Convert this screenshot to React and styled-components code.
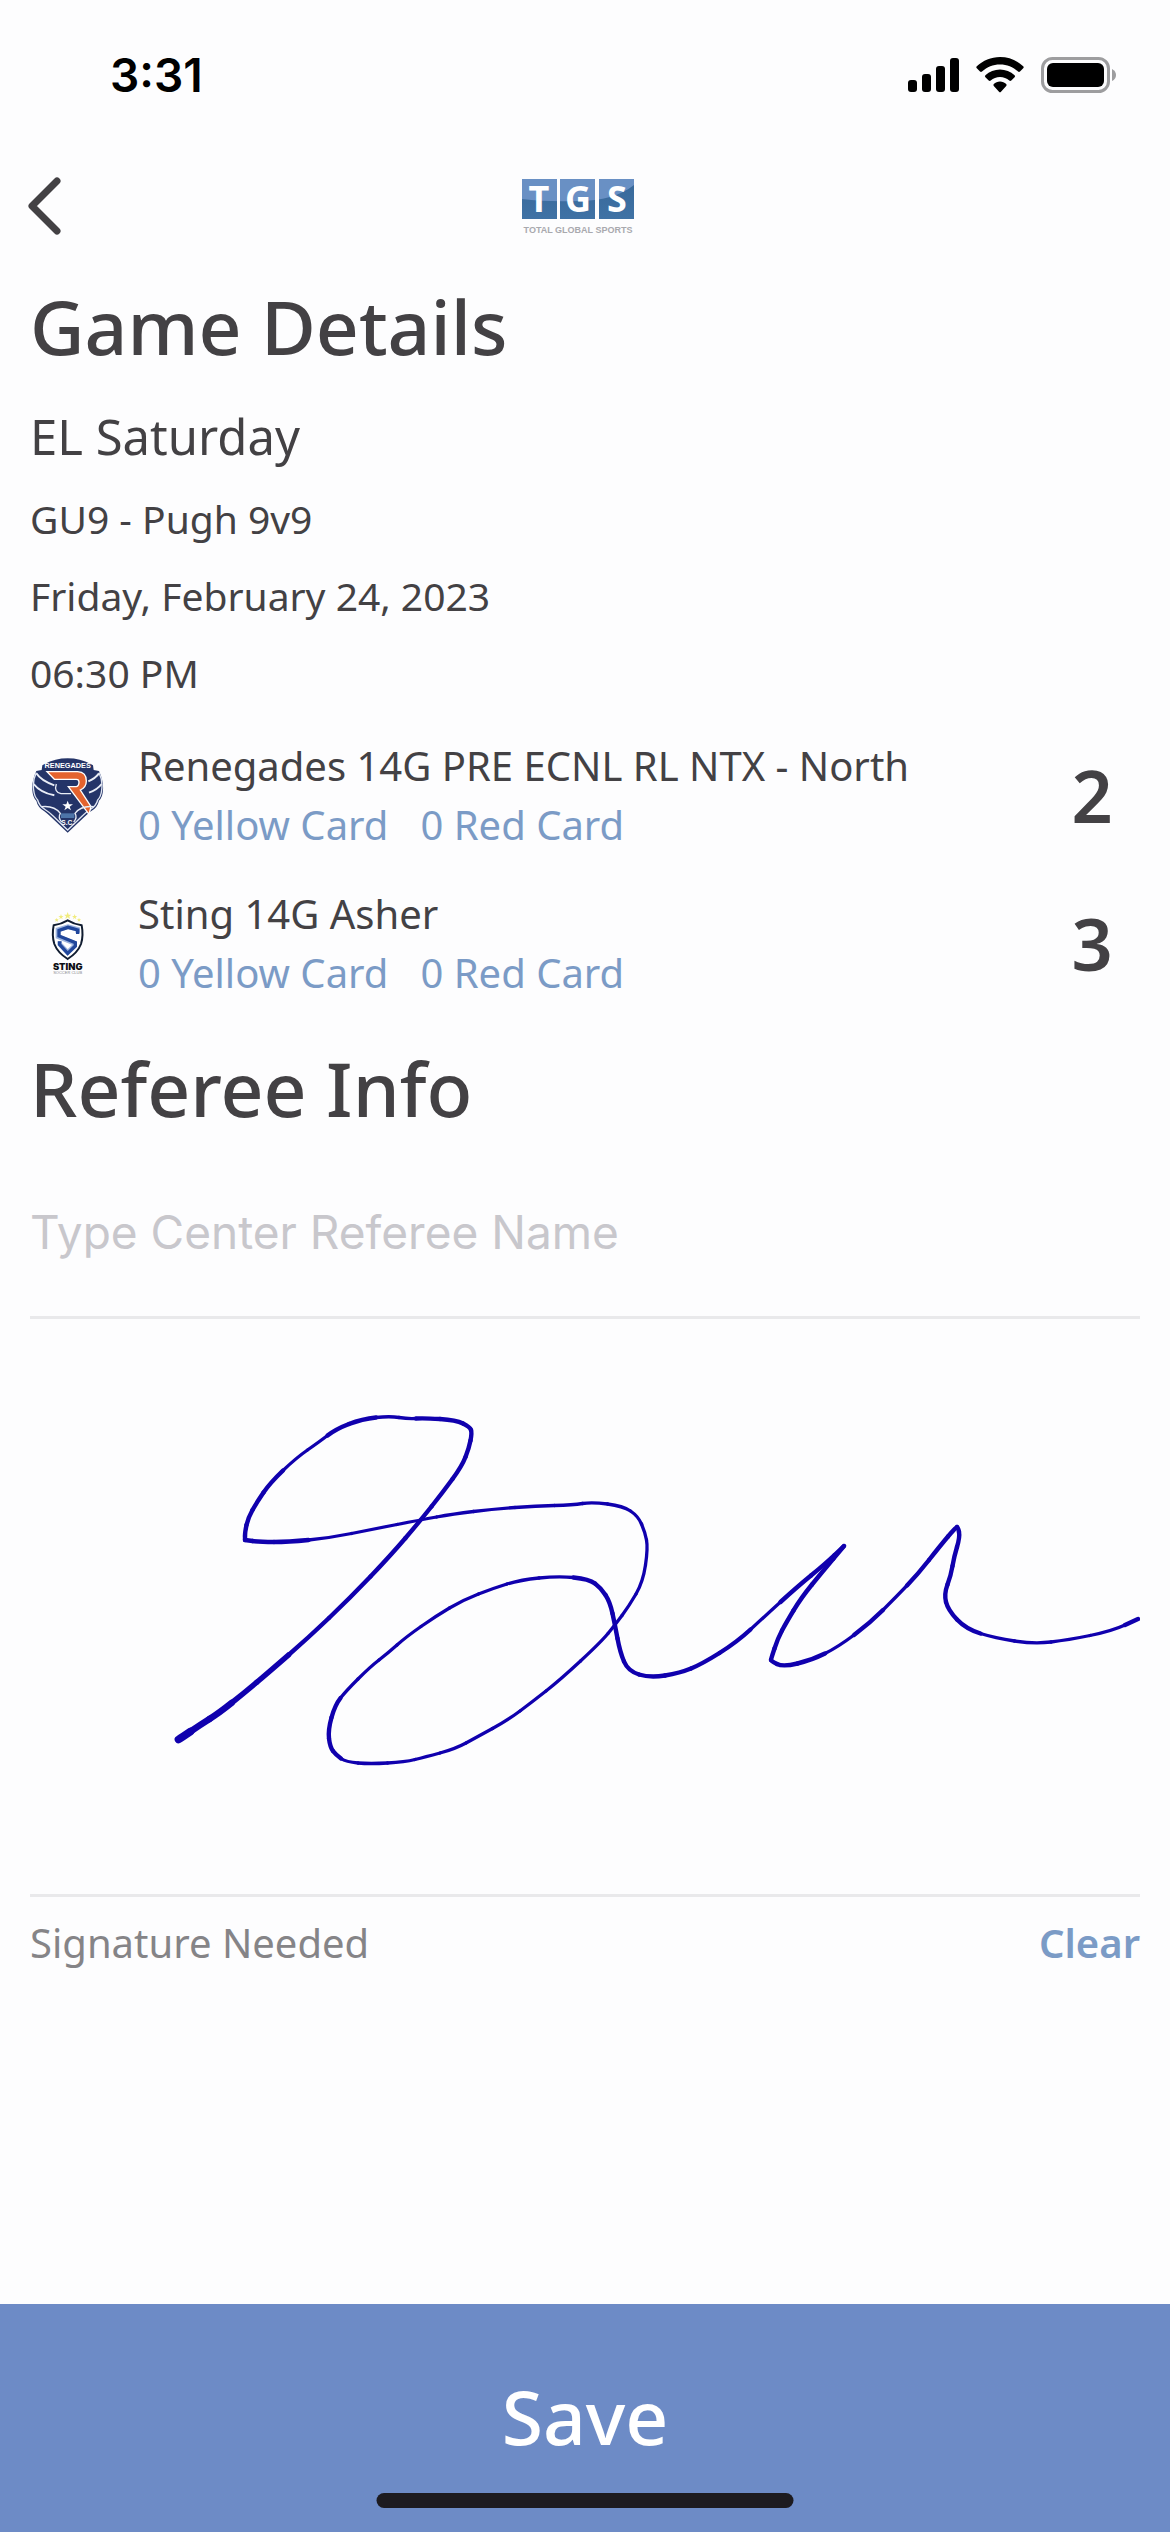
import React, { useState } from 'react'
import styled, { createGlobalStyle } from 'styled-components'

const colors = {
  ink: '#434144',
  muted: '#858487',
  blue: '#7b9bc6',
  save: '#6d8bc6',
  line: '#e9e9eb',
  pen: '#1000ae',
}

// [x, y, width] samples, a doubled sample keeps a sharp corner
const signature = [
  [146, 422, 8], [151, 419, 7], [170, 406, 6], [189, 394, 6], [214, 374, 5],
  [239, 353, 5], [278, 319, 4], [320, 279, 4], [361, 236, 4], [390, 202, 4],
  [413, 173, 4], [432, 147, 4], [439, 129, 4], [442, 114, 4], [440, 108, 4],
  [426, 101, 4], [394, 99, 4], [378, 100, 3], [360, 97, 3], [332, 100, 4],
  [306, 110, 4], [289, 123, 3], [266, 139, 3], [240, 164, 4], [227, 183, 4],
  [218, 199, 4], [215, 213, 4], [215, 221, 4], [215, 221, 4], [230, 223, 4],
  [258, 223, 4], [299, 219, 3], [344, 210, 3], [390, 201, 3], [423, 195, 3],
  [464, 190, 3], [506, 187, 3], [543, 186, 3], [562, 183, 3], [593, 187, 3],
  [608, 197, 3], [615, 213, 3], [618, 229, 3], [613, 263, 3], [599, 287, 3],
  [585, 306, 3], [571, 323, 3], [530, 361, 3], [502, 383, 3], [478, 401, 3],
  [447, 418, 3], [425, 430, 3], [395, 438, 3], [375, 443, 3], [340, 445, 3],
  [316, 443, 3], [306, 436, 4], [300, 428, 4], [298, 411, 4], [305, 386, 4],
  [316, 372, 3], [340, 348, 3], [358, 334, 3], [376, 318, 3], [406, 297, 3],
  [433, 281, 3], [464, 269, 3], [490, 261, 3], [528, 257, 3], [559, 260, 4],
  [571, 269, 4], [580, 283, 4], [585, 306, 4], [590, 333, 4], [598, 352, 4],
  [620, 359, 4], [650, 354, 4], [672, 345, 4], [707, 323, 4], [734, 298, 3],
  [767, 268, 4], [795, 245, 4], [814, 227, 4], [814, 227, 4], [793, 252, 4],
  [771, 279, 4], [756, 304, 4], [748, 319, 4], [741, 340, 4], [741, 342, 4],
  [753, 348, 4], [782, 341, 4], [808, 328, 3], [840, 304, 4], [866, 278, 3],
  [888, 255, 4], [910, 227, 4], [926, 208, 4], [928, 208, 4], [930, 218, 4],
  [924, 238, 4], [921, 256, 4], [914, 275, 4], [918, 291, 4], [936, 310, 4],
  [965, 319, 3], [1004, 325, 3], [1038, 321, 3], [1082, 312, 3], [1108, 300, 4],
]

const teams = [
  { name: 'Renegades 14G PRE ECNL RL NTX - North', yellow: 0, red: 0, score: 2, crest: <RenegadesCrest /> },
  { name: 'Sting 14G Asher', yellow: 0, red: 0, score: 3, crest: <StingCrest /> },
]

const mid = (a, b) => [(a[0] + b[0]) / 2, (a[1] + b[1]) / 2]

function Stroke({ points }) {
  const last = points.length - 1
  return points.map((point, i) => {
    const start = i === 0 ? point : mid(points[i - 1], point)
    const end = i === last ? point : mid(point, points[i + 1])
    return (
      <path
        key={i}
        d={`M${start} Q${point[0]},${point[1]} ${end}`}
        strokeWidth={point[2] * 1.1}
      />
    )
  })
}

function RenegadesCrest() {
  return (
    <svg width="72" height="75" viewBox="21 38 216 225" role="img" aria-label="Renegades S.C.">
      <path
        d="M52 60Q86 39 128 39T204 60L206 74L222 77Q236 106 234 134Q233 156 222 166Q218 186 198 198Q188 206 178 215L128 262L78 215Q68 206 58 198Q38 186 34 166Q23 156 22 134Q20 106 34 77L50 74Z"
        fill="#243468"
      />
      <path
        d="M34 84Q48 106 88 120M26 116Q46 142 88 150M222 84Q212 98 190 108M230 116Q216 134 192 142"
        fill="none"
        stroke="#e9edf6"
        strokeWidth="6"
      />
      <path
        d="M34 82Q22 106 26 134Q28 154 38 164Q42 182 62 194Q72 200 82 210L128 254L174 210Q184 200 194 194Q214 182 218 164Q228 154 230 134Q234 106 222 82"
        fill="none"
        stroke="#dfe5f2"
        strokeWidth="4"
      />
      <path d="M94 116Q86 140 108 145H138" fill="none" stroke="#e9edf6" strokeWidth="4" />
      <path
        d="M66 79H158Q184 80 184 107Q184 126 166 134L198 184L192 207L130 124H154Q162 122 162 110Q162 102 154 102H88Z"
        fill="#e4632f"
        stroke="#fff"
        strokeWidth="4"
      />
      <path d="M128 166L132 177H144L134 184L138 195L128 188L118 195L122 184L112 177H124Z" fill="#fff" />
      <path d="M108 204H148V218H108Z" fill="#4d74a8" />
      <path d="M50 184Q88 180 106 204Q98 216 110 230M206 184Q168 180 150 204Q158 216 146 230" fill="none" stroke="#e9edf6" strokeWidth="4" />
      <CrestText x="128" y="68" fontSize="22" fill="#fff">RENEGADES</CrestText>
      <CrestText x="128" y="238" fontSize="20" fill="#fff">S.C.</CrestText>
    </svg>
  )
}

function StingCrest() {
  return (
    <svg width="36" height="63" viewBox="75 22 108 189" role="img" aria-label="Sting Soccer Club">
      <path
        d="M128 22l3 8h8l-6 5 2 8-7-5-7 5 2-8-6-5h8zM108 28l2 6h6l-5 4 2 6-5-4-5 4 2-6-5-4h6zM149 28l2 6h6l-5 4 2 6-5-4-5 4 2-6-5-4h6zM95 40l2 4h4l-3 3 1 4-4-2-4 2 1-4-3-3h4zM162 40l2 4h4l-3 3 1 4-4-2-4 2 1-4-3-3h4z"
        fill="#f1ec7e"
      />
      <path
        d="M128 47Q146 58 170 62Q176 92 168 118Q158 144 128 163Q98 144 88 118Q80 92 86 62Q110 58 128 47Z"
        fill="#fff"
        stroke="#101c30"
        strokeWidth="6"
      />
      <path d="M158 84V74L129 66L99 75V96L149 116V123L128 143L104 118V110" fill="none" stroke="#9db4de" strokeWidth="14" />
      <path d="M158 88V76L129 68L102 77V94L151 114V124L128 146L104 120V110" fill="none" stroke="#21479b" strokeWidth="10" />
      <StingText x="128" y="196" fontSize="28" fill="#0c0e14">STING</StingText>
      <ClubText x="128" y="208" fontSize="12" fill="#8a8a8e">SOCCER CLUB</ClubText>
    </svg>
  )
}

function Logo() {
  return (
    <svg width="112" height="72" viewBox="0 -9 112 72" role="img" aria-label="TGS Total Global Sports">
      <defs>
        <linearGradient id="tile" x1="0" y1="0" x2="0" y2="1">
          <stop offset="0" stopColor="#386899" />
          <stop offset="1" stopColor="#3f72a5" />
        </linearGradient>
        <clipPath id="tiles">
          <path d="M0 0H35V40H0ZM38 0H73V40H38ZM77 0H112V40H77Z" />
        </clipPath>
      </defs>
      <g clipPath="url(#tiles)">
        <path d="M0 0H112V40H0Z" fill="url(#tile)" />
        <path d="M0 0H112V6Q92 22 56 22Q24 23 0 20Z" fill="#6990c4" />
      </g>
      <LogoLetter x="17" y="33">T</LogoLetter>
      <LogoLetter x="56" y="33">G</LogoLetter>
      <LogoLetter x="95" y="33">S</LogoLetter>
      <LogoCaption x="56" y="54">TOTAL GLOBAL SPORTS</LogoCaption>
    </svg>
  )
}

function StatusIcons() {
  return (
    <Icons aria-hidden="true">
      <svg width="51" height="34" viewBox="0 0 51 34">
        <rect x="0" y="22" width="9" height="12" rx="3" />
        <rect x="14" y="16" width="9" height="18" rx="3" />
        <rect x="28" y="8" width="9" height="26" rx="3" />
        <rect x="42" y="0" width="9" height="34" rx="3" />
      </svg>
      <svg width="48" height="36" viewBox="0 0 48 36">
        <path d="M24 0C33 0 41 3.500 47.200 9.300Q48.200 10.300 47.200 11.300L44 14.500Q43 15.400 42 14.500C37 10 31 7.500 24 7.500S11 10 6 14.500Q5 15.400 4 14.500L.8 11.300Q-.2 10.300.8 9.300C7 3.500 15 0 24 0Z" />
        <path d="M24 12.500C29.500 12.500 34.600 14.600 38.600 18.200Q39.600 19.200 38.600 20.200L35.300 23.400Q34.300 24.300 33.300 23.500C30.700 21.300 27.500 20 24 20S17.300 21.300 14.700 23.500Q13.700 24.300 12.700 23.400L9.400 20.200Q8.400 19.200 9.400 18.200C13.400 14.600 18.500 12.500 24 12.500Z" />
        <path d="M24 24.500C26.400 24.500 28.600 25.400 30.200 26.900Q31.100 27.900 30.200 28.900L25 34.800Q24 35.800 23 34.800L17.800 28.900Q16.900 27.900 17.800 26.900C19.400 25.400 21.600 24.500 24 24.500Z" />
      </svg>
      <svg width="75" height="36" viewBox="0 0 75 36">
        <rect x="1.500" y="1.500" width="66" height="33" rx="10" fill="none" stroke="#9d9d9f" strokeWidth="3" />
        <rect x="6" y="6" width="57" height="24" rx="6" />
        <path d="M71 12Q75 14 75 18T71 24Z" fill="#9d9d9f" />
      </svg>
    </Icons>
  )
}

const Team = ({ name, yellow, red, score, crest }) => (
  <TeamRow>
    <Crest>{crest}</Crest>
    <TeamInfo>
      <TeamName>{name}</TeamName>
      <Cards>
        <CardLink href="#yellow">{yellow} Yellow Card</CardLink>
        <CardLink href="#red">{red} Red Card</CardLink>
      </Cards>
    </TeamInfo>
    <Score>{score}</Score>
  </TeamRow>
)

export default function App() {
  const [referee, setReferee] = useState('')
  const [points, setPoints] = useState(signature)

  return (
    <Page>
      <GlobalStyle />
      <StatusBar>
        <Time>3:31</Time>
        <StatusIcons />
      </StatusBar>
      <Header>
        <BackButton type="button" aria-label="Back">
          <svg width="33" height="58" viewBox="0 0 33 58">
            <path d="M29 4L4 29L29 54" fill="none" stroke={colors.ink} strokeWidth="7" strokeLinecap="round" strokeLinejoin="round" />
          </svg>
        </BackButton>
        <Logo />
      </Header>
      <Content>
        <Title>Game Details</Title>
        <Flight>EL Saturday</Flight>
        <Detail>GU9 - Pugh 9v9</Detail>
        <Detail>Friday, February 24, 2023</Detail>
        <Detail>06:30 PM</Detail>
        <Teams>
          {teams.map(team => (
            <Team key={team.name} {...team} />
          ))}
        </Teams>
        <Title as="h2">Referee Info</Title>
        <RefereeInput
          type="text"
          aria-label="Center Referee Name"
          placeholder="Type Center Referee Name"
          value={referee}
          onChange={e => setReferee(e.target.value)}
        />
        <SignaturePad viewBox="0 0 1110 575" role="img" aria-label="Signature">
          <Stroke points={points} />
        </SignaturePad>
        <SignatureBar>
          <Hint>Signature Needed</Hint>
          <ClearButton type="button" onClick={() => setPoints([])}>
            Clear
          </ClearButton>
        </SignatureBar>
      </Content>
      <Footer>
        <SaveButton type="button">Save</SaveButton>
        <HomeIndicator />
      </Footer>
    </Page>
  )
}

const GlobalStyle = createGlobalStyle`
  * {
    box-sizing: border-box;
  }

  body {
    margin: 0;
    background: #fdfdfe;
  }

  button {
    border: 0;
    padding: 0;
    background: none;
    font-family: inherit;
    cursor: pointer;
  }
`

const Page = styled.div`
  min-height: 100vh;
  display: flex;
  flex-direction: column;
  font-family: 'Noto Sans', sans-serif;
  color: ${colors.ink};
`

const StatusBar = styled.div`
  height: 150px;
  padding: 0 54px 0 110px;
  display: flex;
  justify-content: space-between;
  align-items: center;
`

const Time = styled.div`
  font-family: Inter, sans-serif;
  font-weight: 600;
  font-size: 46px;
  color: #000;
`

const Icons = styled.div`
  display: flex;
  align-items: center;
  gap: 17px;
`

const Header = styled.header`
  height: 112px;
  padding: 0 30px 0 16px;
  display: grid;
  grid-template-columns: 1fr auto 1fr;
  align-items: center;
`

const BackButton = styled.button`
  justify-self: start;
  padding: 12px;
  display: flex;
`

const LogoLetter = styled.text`
  font-family: 'Noto Sans', sans-serif;
  font-weight: 700;
  font-size: 36px;
  text-anchor: middle;
  fill: #fff;
`

const LogoCaption = styled.text`
  font-family: 'Liberation Sans', sans-serif;
  font-weight: 700;
  font-size: 9px;
  text-anchor: middle;
  fill: #a9a9ae;
`

const CrestText = styled.text`
  font-family: 'Liberation Sans', sans-serif;
  font-weight: 700;
  text-anchor: middle;
`

const StingText = styled(CrestText)`
  font-family: Inter, sans-serif;
  font-weight: 900;
`

const ClubText = styled(CrestText)`
  font-weight: 400;
`

const Content = styled.main`
  flex: 1;
  padding: 16px 30px 0;
`

const Title = styled.h1`
  margin: 0;
  font-weight: 500;
  font-size: 75px;
  line-height: 96px;
`

const Flight = styled.div`
  margin-top: 18px;
  font-size: 49px;
  line-height: 88px;
`

const Detail = styled.div`
  font-size: 39px;
  line-height: 77px;
`

const Teams = styled.ul`
  margin: 25px 0 38px;
  padding: 0;
  list-style: none;
  display: flex;
  flex-direction: column;
  gap: 30px;
`

const TeamRow = styled.li`
  display: flex;
  align-items: center;
`

const Crest = styled.div`
  width: 76px;
  margin-right: 32px;
  display: flex;
  justify-content: center;
`

const TeamInfo = styled.div`
  flex: 1;
  font-size: 40px;
  line-height: 59px;
`

const TeamName = styled.div``

const Cards = styled.div`
  display: flex;
  gap: 32px;
`

const CardLink = styled.a`
  color: ${colors.blue};
  text-decoration: none;
`

const Score = styled.div`
  width: 96px;
  font-weight: 600;
  font-size: 72px;
  line-height: 96px;
  text-align: center;
`

const RefereeInput = styled.input`
  display: block;
  width: 100%;
  height: 171px;
  margin-top: 12px;
  padding: 0;
  border: 0;
  border-bottom: 3px solid ${colors.line};
  outline: 0;
  background: none;
  font-family: Inter, sans-serif;
  font-size: 46px;
  color: ${colors.ink};

  &::placeholder {
    color: #c8c7cc;
    opacity: 1;
  }
`

const SignaturePad = styled.svg`
  display: block;
  width: 100%;
  border-bottom: 3px solid ${colors.line};
  fill: none;
  stroke: ${colors.pen};
  stroke-linecap: round;
  stroke-linejoin: round;
`

const SignatureBar = styled.div`
  padding: 16px 0;
  display: flex;
  justify-content: space-between;
  font-size: 40px;
  line-height: 59px;
`

const Hint = styled.div`
  color: ${colors.muted};
`

const ClearButton = styled.button`
  font-weight: 600;
  font-size: 40px;
  line-height: 59px;
  color: ${colors.blue};
`

const Footer = styled.footer`
  position: relative;
`

const SaveButton = styled.button`
  display: block;
  width: 100%;
  padding: 64px 0 68px;
  background: ${colors.save};
  font-weight: 500;
  font-size: 75px;
  line-height: 96px;
  color: #fff;
`

const HomeIndicator = styled.div`
  position: absolute;
  bottom: 24px;
  left: 50%;
  width: 417px;
  height: 15px;
  border-radius: 8px;
  background: #1d1b20;
  transform: translateX(-50%);
`
